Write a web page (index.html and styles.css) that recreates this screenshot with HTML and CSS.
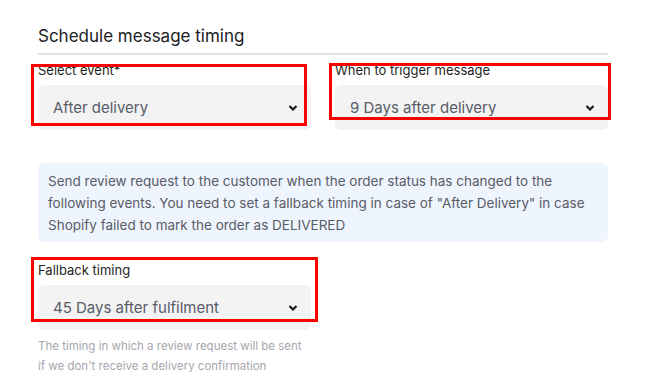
FILE: index.html
```html
<!DOCTYPE html>
<html lang="en">
<head>
    <meta charset="UTF-8">
    <meta name="viewport" content="width=device-width, initial-scale=1.0">
    <title>Schedule message timing</title>
    <link rel="stylesheet" href="styles.css">
</head>
<body>
    <div class="panel">
        <h2 class="title">Schedule message timing</h2>

        <div class="row">
            <div class="field">
                <label>Select event*</label>
                <div class="select">
                    <span>After delivery</span>
                    <svg class="chevron" viewBox="0 0 10 6"><path d="M1.5 1l3.5 3.5 3.5-3.5"/></svg>
                </div>
            </div>
            <div class="field">
                <label>When to trigger message</label>
                <div class="select">
                    <span>9 Days after delivery</span>
                    <svg class="chevron" viewBox="0 0 10 6"><path d="M1.5 1l3.5 3.5 3.5-3.5"/></svg>
                </div>
            </div>
        </div>

        <div class="info">
            Send review request to the customer when the order status has changed to the
            following events. You need to set a fallback timing in case of "After Delivery" in case
            Shopify failed to mark the order as DELIVERED
        </div>

        <div class="field fallback">
            <label>Fallback timing</label>
            <div class="select">
                <span>45 Days after fulfilment</span>
                <svg class="chevron" viewBox="0 0 10 6"><path d="M1.5 1l3.5 3.5 3.5-3.5"/></svg>
            </div>
        </div>
        <p class="hint">The timing in which a review request will be sent<br>if we don't receive a delivery confirmation</p>

        <!-- red annotation boxes -->
        <div class="mark mark-event"></div>
        <div class="mark mark-trigger"></div>
        <div class="mark mark-fallback"></div>
    </div>
</body>
</html>
```

FILE: styles.css
```css
body {
  margin: 0;
  padding: 0;
  font-family: Inter, "Noto Sans", sans-serif;
  background: #fff;
  color: #222;
}

.panel {
  position: relative;
  width: 570px;
  padding: 24px 0 0 38px;
}

.title {
  margin: 0;
  font-size: 17px;
  font-weight: 400;
  line-height: 24px;
  padding-bottom: 5px;
  border-bottom: 2px solid #e3e3e3;
  color: #202124;
}

/* two selects side by side */
.row {
  display: flex;
  gap: 24px;
  margin-top: 6px;
}

.field {
  width: 273px;
}
.field label {
  display: block;
  font-size: 13px;
  line-height: 18px;
  margin-bottom: 6px;
  color: #1f1f24;
}

.select {
  display: flex;
  align-items: center;
  justify-content: space-between;
  height: 45px;
  box-sizing: border-box;
  padding: 0 13px 0 15px;
  background: #f3f3f3;
  border-radius: 6px;
  font-size: 15px;
  color: #585b68;
}
.chevron {
  width: 10px;
  height: 6px;
  fill: none;
  stroke: #1c1c1c;
  stroke-width: 2.2;
}

.info {
  margin-top: 33px;
  padding: 7px 10px 6px;
  background: #eef5fe;
  border-radius: 6px;
  font-size: 13.5px;
  line-height: 22px;
  color: #5a5b66;
}

.fallback {
  margin-top: 19px;
}

.hint {
  margin: 6px 0 0;
  font-size: 11.5px;
  line-height: 20px;
  color: #a6a6ae;
}

/* annotation overlay */
.mark {
  position: absolute;
  border: 3px solid #f00;
}
.mark-event {
  left: 31px;
  top: 64px;
  width: 270px;
  height: 56px;
}
.mark-trigger {
  left: 329px;
  top: 63px;
  width: 276px;
  height: 51px;
}
.mark-fallback {
  left: 31px;
  top: 257px;
  width: 281px;
  height: 59px;
}
```
